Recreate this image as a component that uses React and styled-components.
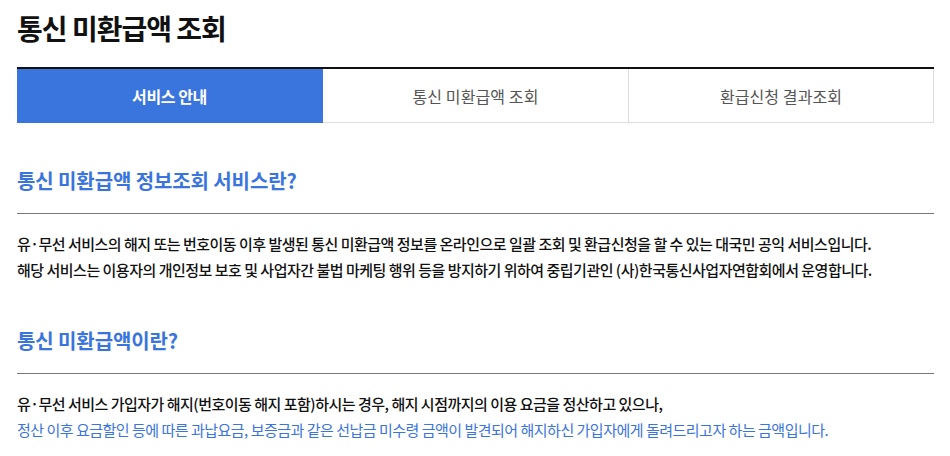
import React from "react";
import styled, { createGlobalStyle } from "styled-components";

const Global = createGlobalStyle`
  html, body { margin: 0; padding: 0; background: #fff; }
  body { font-family: "Noto Sans CJK KR", "Noto Sans", sans-serif; color: #111; }
`;

const Page = styled.div`
  padding: 0 16px 0 17px;
  width: 917px;
`;

const Title = styled.h1`
  margin: 0;
  padding-top: 8px;
  height: 59px;
  font-size: 28px;
  font-weight: 700;
  line-height: 40px;
  letter-spacing: -1px;
  color: #111;
`;

const Tabs = styled.div`
  display: grid;
  grid-template-columns: 306px 306px 1fr;
  border-top: 2px solid #111;
  height: 54px;
`;

const Tab = styled.div`
  display: flex;
  align-items: center;
  justify-content: center;
  font-size: 16px;
  letter-spacing: ${(p) => (p.$active ? "-0.4px" : "0.1px")};
  font-weight: ${(p) => (p.$active ? 700 : 400)};
  color: ${(p) => (p.$active ? "#fff" : "#555")};
  background: ${(p) => (p.$active ? "#3a74dd" : "#fff")};
  border-bottom: 1px solid ${(p) => (p.$active ? "#3a74dd" : "#ddd")};
  border-right: 1px solid #ddd;
  &:first-child { border-right-color: #3a74dd; }
`;

const Section = styled.section`
  margin-top: ${(p) => p.$top}px;
`;

const Heading = styled.h2`
  margin: 0;
  font-size: 20px;
  font-weight: 700;
  line-height: 28px;
  letter-spacing: -0.1px;
  color: #3a74dd;
  padding-bottom: 18px;
  border-bottom: 1px solid #777;
`;

const Body = styled.div`
  padding-top: 17px;
  font-size: 15px;
  line-height: 26px;
  letter-spacing: -0.5px;
`;

const Line = styled.p`
  margin: 0;
  color: ${(p) => (p.$blue ? "#3a74dd" : "#111")};
  font-weight: ${(p) => (p.$blue ? 400 : 500)};
`;

export default function App() {
  return (
    <>
      <Global />
      <Page>
        <Title>통신 미환급액 조회</Title>
        <Tabs>
          <Tab $active>서비스 안내</Tab>
          <Tab>통신 미환급액 조회</Tab>
          <Tab>환급신청 결과조회</Tab>
        </Tabs>
        <Section $top={44}>
          <Heading>통신 미환급액 정보조회 서비스란?</Heading>
          <Body>
            <Line>유·무선 서비스의 해지 또는 번호이동 이후 발생된 통신 미환급액 정보를 온라인으로 일괄 조회 및 환급신청을 할 수 있는 대국민 공익 서비스입니다.</Line>
            <Line>해당 서비스는 이용자의 개인정보 보호 및 사업자간 불법 마케팅 행위 등을 방지하기 위하여 중립기관인 (사)한국통신사업자연합회에서 운영합니다.</Line>
          </Body>
        </Section>
        <Section $top={44}>
          <Heading>통신 미환급액이란?</Heading>
          <Body>
            <Line>유·무선 서비스 가입자가 해지(번호이동 해지 포함)하시는 경우, 해지 시점까지의 이용 요금을 정산하고 있으나,</Line>
            <Line $blue>정산 이후 요금할인 등에 따른 과납요금, 보증금과 같은 선납금 미수령 금액이 발견되어 해지하신 가입자에게 돌려드리고자 하는 금액입니다.</Line>
          </Body>
        </Section>
      </Page>
    </>
  );
}
